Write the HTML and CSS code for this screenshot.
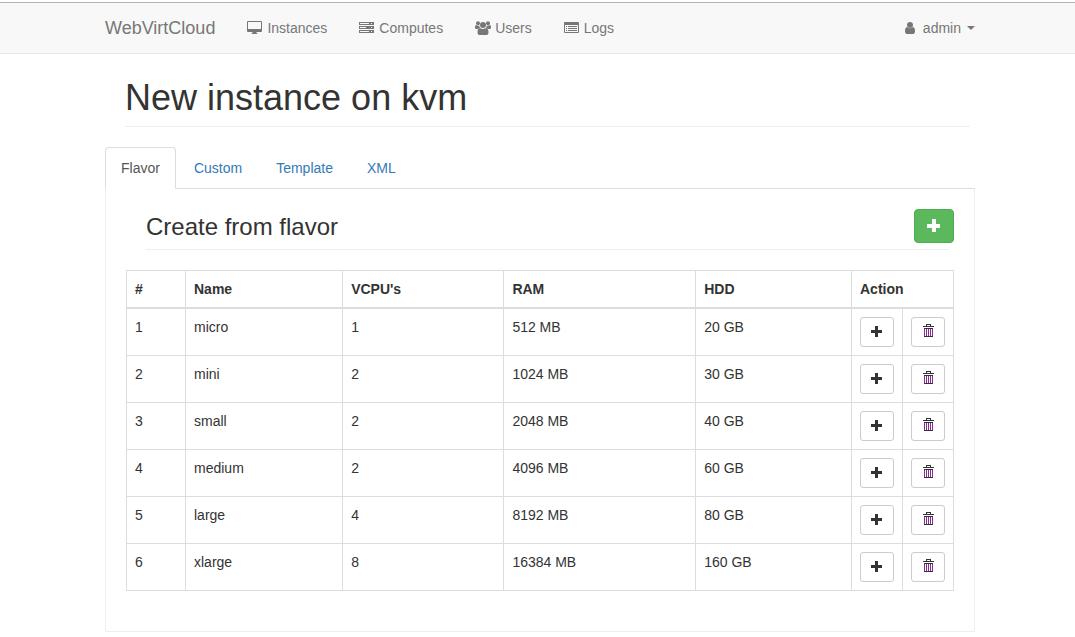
FILE: index.html
```html
<!DOCTYPE html>
<html lang="en">
<head>
<meta charset="utf-8">
<title>WebVirtCloud</title>
<link rel="stylesheet" href="styles.css">
</head>
<body>
<svg class="sprite" aria-hidden="true">
  <symbol id="plus" viewBox="0 0 14 14"><path d="M5 1h3v4h4v3H8v4H5V8H1V5h4z"/></symbol>
  <symbol id="trash" viewBox="0 0 14 16"><path class="purple" d="M3 5h1v7H3zM5 5h1v7H5zM7 5h1v7H7zM9 5h1v7H9zM11 5h1v7h-1z"/><path class="dark" d="M5 0h5v2h3v1H2V2h3zM6 1v1h3V1zM3 4h9v1H3zM3 12h9v1H3z"/></symbol>
</svg>
<header class="navbar">
  <div class="container navbar-row">
    <a class="brand" href="#">WebVirtCloud</a>
    <nav class="nav">
      <a href="#"><svg class="icon" viewBox="0 0 16 14"><path fill-rule="evenodd" d="M1 0h13q1 0 1 1v9q0 1-1 1H9.500v1l1.500 1H4l1.500-1v-1H1q-1 0-1-1V1q0-1 1-1zM1 1v7h13V1z"/></svg>Instances</a>
      <a href="#"><svg class="icon" viewBox="0 0 16 14"><path fill-rule="evenodd" d="M0 1h15v3H0zM1 2v1h9V2zM12 2v1h1V2zM0 5h15v3H0zM1 6v1h6V6zM12 6v1h1V6zM0 9h15v3H0zM1 10v1h9v-1zM12 10v1h1v-1z"/></svg>Computes</a>
      <a href="#"><svg class="icon" viewBox="0 0 16 14"><circle cx="3" cy="2.200" r="2"/><circle cx="13" cy="2.200" r="2"/><circle cx="8" cy="4" r="3"/><path d="M0 7V6q0-2 1.200-2 1.500 1 3 .4 0 1.600 1 2.600-1.700 0-2.600 1H1.500Q0 8 0 7zM16 7V6q0-2-1.200-2-1.500 1-3 .4 0 1.600-1 2.600 1.700 0 2.600 1h1.100Q16 8 16 7zM5 7q3 2 6 0 2.500 0 2.500 4.500 0 2.500-2 2.500h-7q-2 0-2-2.500Q2.500 7 5 7z"/></svg>Users</a>
      <a href="#"><svg class="icon" viewBox="0 0 16 14"><path fill-rule="evenodd" d="M1 1h13q1 0 1 1v9q0 1-1 1H1q-1 0-1-1V2q0-1 1-1zM1 4v7h13V4zM2 5h1v1H2zM4 5h9v1H4zM2 7h1v1H2zM4 7h9v1H4zM2 9h1v1H2zM4 9h9v1H4z"/></svg>Logs</a>
    </nav>
    <button class="account" type="button"><svg class="user" viewBox="0 0 10 12"><circle cx="5" cy="3" r="3"/><path d="M2 5q3 2.500 6 0 2 .5 2 4 0 3-2 3H2q-2 0-2-3 0-3.500 2-4z"/></svg>admin<span class="caret"></span></button>
  </div>
</header>
<main class="container">
  <h1>New instance on kvm</h1>
  <div class="tabs" role="tablist">
    <a class="tab active" role="tab" aria-selected="true" href="#flavor">Flavor</a>
    <a class="tab" role="tab" href="#custom">Custom</a>
    <a class="tab" role="tab" href="#template">Template</a>
    <a class="tab" role="tab" href="#xml">XML</a>
  </div>
  <section class="panel" id="flavor">
    <div class="panel-head">
      <h3>Create from flavor</h3>
      <button class="add" type="button" aria-label="Add flavor"><svg class="plus" viewBox="0 0 14 14"><path d="M5 0h4v5h4v4H9v4H5V9H0V5h5z"/></svg></button>
    </div>
    <table>
      <colgroup><col class="c-id"><col class="c-name"><col class="c-cpu"><col class="c-ram"><col class="c-hdd"><col class="c-act"><col class="c-act"></colgroup>
      <thead><tr><th>#</th><th>Name</th><th>VCPU's</th><th>RAM</th><th>HDD</th><th colspan="2">Action</th></tr></thead>
      <tbody>
        <tr><td>1</td><td>micro</td><td>1</td><td>512 MB</td><td>20 GB</td><td><button class="btn" type="button" aria-label="Create micro"><svg class="plus"><use href="#plus"/></svg></button></td><td><button class="btn" type="button" aria-label="Delete micro"><svg class="trash"><use href="#trash"/></svg></button></td></tr>
        <tr><td>2</td><td>mini</td><td>2</td><td>1024 MB</td><td>30 GB</td><td><button class="btn" type="button" aria-label="Create mini"><svg class="plus"><use href="#plus"/></svg></button></td><td><button class="btn" type="button" aria-label="Delete mini"><svg class="trash"><use href="#trash"/></svg></button></td></tr>
        <tr><td>3</td><td>small</td><td>2</td><td>2048 MB</td><td>40 GB</td><td><button class="btn" type="button" aria-label="Create small"><svg class="plus"><use href="#plus"/></svg></button></td><td><button class="btn" type="button" aria-label="Delete small"><svg class="trash"><use href="#trash"/></svg></button></td></tr>
        <tr><td>4</td><td>medium</td><td>2</td><td>4096 MB</td><td>60 GB</td><td><button class="btn" type="button" aria-label="Create medium"><svg class="plus"><use href="#plus"/></svg></button></td><td><button class="btn" type="button" aria-label="Delete medium"><svg class="trash"><use href="#trash"/></svg></button></td></tr>
        <tr><td>5</td><td>large</td><td>4</td><td>8192 MB</td><td>80 GB</td><td><button class="btn" type="button" aria-label="Create large"><svg class="plus"><use href="#plus"/></svg></button></td><td><button class="btn" type="button" aria-label="Delete large"><svg class="trash"><use href="#trash"/></svg></button></td></tr>
        <tr><td>6</td><td>xlarge</td><td>8</td><td>16384 MB</td><td>160 GB</td><td><button class="btn" type="button" aria-label="Create xlarge"><svg class="plus"><use href="#plus"/></svg></button></td><td><button class="btn" type="button" aria-label="Delete xlarge"><svg class="trash"><use href="#trash"/></svg></button></td></tr>
      </tbody>
    </table>
  </section>
</main>
</body>
</html>
```
FILE: styles.css
```css
* { box-sizing: border-box; }
body {
  margin: 0;
  background: #fff;
  color: #333;
  font: 14px/20px "Liberation Sans", Arial, sans-serif;
}
a { text-decoration: none; color: #337ab7; }
button { font: inherit; cursor: pointer; }
svg { fill: currentColor; }
.sprite { display: none; }
.container { max-width: 875px; margin: 0 auto; padding-left: 5px; }
.navbar .container, main.container { position: static; }
.navbar, main { padding-left: 0; }

.navbar {
  border-top: 1px solid #b4b4b4;
  border-bottom: 1px solid #e7e7e7;
  background: #f8f8f8;
  margin-top: 2px;
}
.navbar-row { display: flex; align-items: center; height: 50px; }
.brand { font-size: 18px; color: #777; margin-right: 32px; }
.nav { display: flex; gap: 32px; flex: 1; }
.nav a { display: flex; align-items: center; gap: 4px; color: #777; }
.icon { width: 16px; height: 14px; }
.account {
  display: flex;
  align-items: center;
  border: 0;
  padding: 0;
  background: none;
  color: #777;
}
.user { width: 10px; height: 12px; margin-right: 8px; }
.caret {
  margin-left: 6px;
  border: 4px solid transparent;
  border-top-color: currentColor;
  border-bottom: 0;
}

h1 {
  margin: 24px 5px 20px 20px;
  padding-bottom: 9px;
  border-bottom: 1px solid #eee;
  font-size: 36px;
  line-height: 39px;
  font-weight: 400;
}

.tabs { display: flex; gap: 2px; border-bottom: 1px solid #ddd; }
.tab {
  padding: 10px 15px;
  border: 1px solid transparent;
  border-radius: 4px 4px 0 0;
  margin-bottom: -1px;
}
.tab.active {
  color: #555;
  background: #fff;
  border-color: #ddd #ddd #fff;
}

.panel { border: 1px solid #eee; border-top: 0; padding: 20px 20px 40px; }
.panel-head { display: grid; margin-bottom: 20px; }
.panel-head > * { grid-area: 1 / 1; }
h3 {
  margin: 0 5px 0 20px;
  padding: 5px 0 9px;
  border-bottom: 1px solid #eee;
  font-size: 24px;
  line-height: 26px;
  font-weight: 400;
}
.add {
  justify-self: end;
  display: grid;
  place-items: center;
  width: 40px;
  height: 34px;
  padding: 0;
  border: 1px solid #4cae4c;
  border-radius: 4px;
  background: #5cb85c;
  color: #fff;
}

table { width: 100%; table-layout: fixed; border-collapse: collapse; }
.c-id { width: 59px; }
.c-name { width: 19%; }
.c-cpu { width: 19.5%; }
.c-ram { width: 23.2%; }
.c-act { width: 51px; }
th, td {
  padding: 8px;
  border: 1px solid #ddd;
  text-align: left;
  vertical-align: top;
}
th { border-bottom-width: 2px; }
.btn {
  display: grid;
  place-items: center;
  width: 34px;
  height: 30px;
  padding: 0;
  border: 1px solid #ccc;
  border-radius: 3px;
  background: #fff;
  color: #333;
}
.plus { width: 14px; height: 14px; }
.trash { width: 14px; height: 16px; }
.dark { fill: #333; }
.purple { fill: #8b2a91; }
```
